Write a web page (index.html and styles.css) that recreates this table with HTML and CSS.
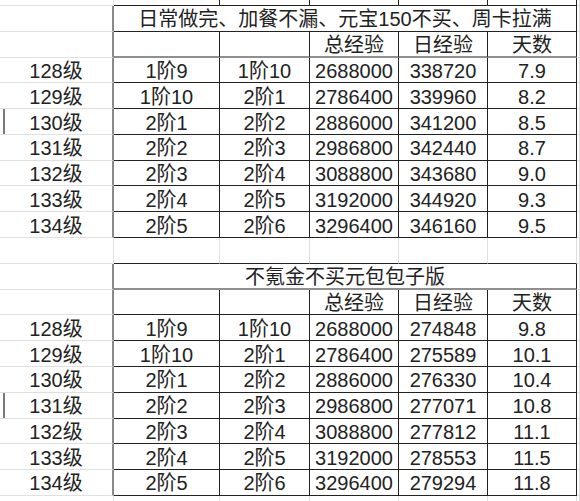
FILE: index.html
```html
<!DOCTYPE html>
<html lang="zh">
<head>
<meta charset="utf-8">
<title>经验表</title>
<link rel="stylesheet" href="styles.css">
</head>
<body>
<div class="sheet">
  <div class="row top"><div class="c"></div><div class="c t"></div><div class="c t"></div><div class="c t"></div><div class="c t"></div><div class="c t"></div><div class="c"></div></div>

  <div class="row"><div class="c a"></div><div class="c t title">日常做完、加餐不漏、元宝150不买、周卡拉满</div><div class="c"></div></div>
  <div class="row"><div class="c a"></div><div class="c t g"></div><div class="c t g"></div><div class="c t g">总经验</div><div class="c t g">日经验</div><div class="c t g">天数</div><div class="c"></div></div>
  <div class="row"><div class="c a">128级</div><div class="c t">1阶9</div><div class="c t">1阶10</div><div class="c t">2688000</div><div class="c t">338720</div><div class="c t">7.9</div><div class="c"></div></div>
  <div class="row"><div class="c a">129级</div><div class="c t">1阶10</div><div class="c t">2阶1</div><div class="c t">2786400</div><div class="c t">339960</div><div class="c t">8.2</div><div class="c"></div></div>
  <div class="row"><div class="c a mark">130级</div><div class="c t">2阶1</div><div class="c t">2阶2</div><div class="c t">2886000</div><div class="c t">341200</div><div class="c t">8.5</div><div class="c"></div></div>
  <div class="row"><div class="c a">131级</div><div class="c t">2阶2</div><div class="c t">2阶3</div><div class="c t">2986800</div><div class="c t">342440</div><div class="c t">8.7</div><div class="c"></div></div>
  <div class="row"><div class="c a">132级</div><div class="c t">2阶3</div><div class="c t">2阶4</div><div class="c t">3088800</div><div class="c t">343680</div><div class="c t">9.0</div><div class="c"></div></div>
  <div class="row"><div class="c a">133级</div><div class="c t">2阶4</div><div class="c t">2阶5</div><div class="c t">3192000</div><div class="c t">344920</div><div class="c t">9.3</div><div class="c"></div></div>
  <div class="row"><div class="c a">134级</div><div class="c t">2阶5</div><div class="c t">2阶6</div><div class="c t">3296400</div><div class="c t">346160</div><div class="c t">9.5</div><div class="c"></div></div>

  <div class="row"><div class="c"></div><div class="c tb"></div><div class="c tb"></div><div class="c tb"></div><div class="c tb"></div><div class="c tb"></div><div class="c"></div></div>

  <div class="row"><div class="c a"></div><div class="c t g title">不氪金不买元包包子版</div><div class="c"></div></div>
  <div class="row"><div class="c a"></div><div class="c t"></div><div class="c t"></div><div class="c t">总经验</div><div class="c t">日经验</div><div class="c t">天数</div><div class="c"></div></div>
  <div class="row"><div class="c a">128级</div><div class="c t">1阶9</div><div class="c t">1阶10</div><div class="c t">2688000</div><div class="c t">274848</div><div class="c t">9.8</div><div class="c"></div></div>
  <div class="row"><div class="c a">129级</div><div class="c t">1阶10</div><div class="c t">2阶1</div><div class="c t">2786400</div><div class="c t">275589</div><div class="c t">10.1</div><div class="c"></div></div>
  <div class="row"><div class="c a">130级</div><div class="c t">2阶1</div><div class="c t">2阶2</div><div class="c t">2886000</div><div class="c t">276330</div><div class="c t">10.4</div><div class="c"></div></div>
  <div class="row"><div class="c a mark">131级</div><div class="c t">2阶2</div><div class="c t">2阶3</div><div class="c t">2986800</div><div class="c t">277071</div><div class="c t">10.8</div><div class="c"></div></div>
  <div class="row"><div class="c a">132级</div><div class="c t">2阶3</div><div class="c t">2阶4</div><div class="c t">3088800</div><div class="c t">277812</div><div class="c t">11.1</div><div class="c"></div></div>
  <div class="row"><div class="c a">133级</div><div class="c t">2阶4</div><div class="c t">2阶5</div><div class="c t">3192000</div><div class="c t">278553</div><div class="c t">11.5</div><div class="c"></div></div>
  <div class="row"><div class="c a">134级</div><div class="c t">2阶5</div><div class="c t">2阶6</div><div class="c t">3296400</div><div class="c t">279294</div><div class="c t">11.8</div><div class="c"></div></div>

  <div class="row tail"><div class="c"></div><div class="c"></div><div class="c"></div><div class="c"></div><div class="c"></div><div class="c"></div><div class="c"></div></div>
</div>
</body>
</html>
```

FILE: styles.css
```css
html, body {
  margin: 0;
  padding: 0;
  background: #ffffff;
  overflow: hidden;
}

.sheet {
  width: 580px;
  height: 501px;
  overflow: hidden;
  font-family: "Liberation Sans", "Noto Sans CJK SC", sans-serif;
  font-size: 20px;
  color: #222222;
}

.row {
  display: grid;
  grid-template-columns: 114px 106px 90px 89px 89px 89px 1fr;
  height: 25.79px;
}

.row.top {
  height: 6px;
}

.row.tail {
  height: 12px;
}

.c {
  box-sizing: border-box;
  border-right: 1px solid #e0e0e0;
  border-bottom: 1px solid #e0e0e0;
  display: flex;
  align-items: center;
  justify-content: center;
  padding-top: 2px;
  line-height: 22px;
  white-space: nowrap;
  overflow: hidden;
}

.row.top .c,
.row.tail .c {
  padding-top: 0;
}

/* column A next to a table: gray left edge of the table */
.c.a {
  border-right: 2px solid #8a8a8a;
}

/* bordered table cell */
.c.t {
  border-right: 1px solid #222222;
  border-bottom: 1px solid #222222;
}

/* gray heavier bottom line */
.c.t.g {
  border-bottom: 2px solid #8f8f8f;
}

/* blank row above second table: only the bottom edge is dark */
.c.tb {
  border-bottom: 1px solid #222222;
}

.c.title {
  grid-column: span 5;
}

.c.mark {
  background: linear-gradient(to right, transparent 3px, #7a7a7a 3px, #7a7a7a 5px, transparent 5px);
}
```
